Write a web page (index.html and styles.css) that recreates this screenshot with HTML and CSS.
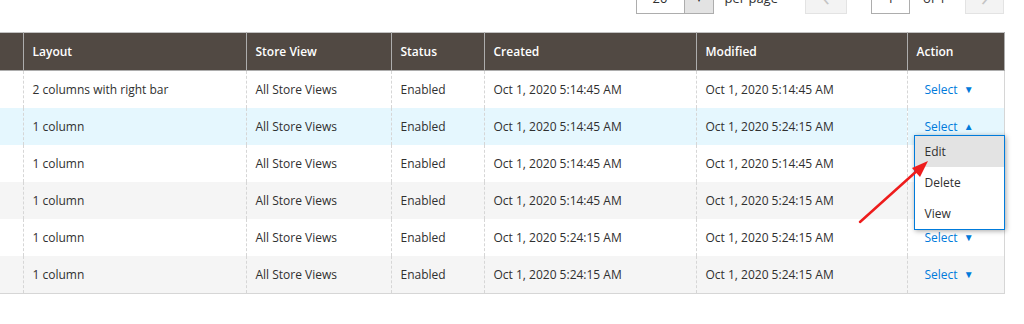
FILE: index.html
```html
<!DOCTYPE html>
<html lang="en">
<head>
  <meta charset="UTF-8" />
  <title>CMS Pages</title>
  <link rel="stylesheet" href="styles.css">
</head>
<body>
  <div class="grid-wrap">
    <div class="toolbar">
      <div class="limiter">
        <span class="limiter-value">20</span>
        <span class="limiter-btn">▾</span>
      </div>
      <span class="toolbar-label">per page</span>
      <span class="pager-btn prev">&lsaquo;</span>
      <span class="page-input">1</span>
      <span class="toolbar-label of">of 1</span>
      <span class="pager-btn next">&rsaquo;</span>
    </div>

    <table class="data-grid">
      <thead>
        <tr>
          <th class="col-check"></th>
          <th class="col-layout">Layout</th>
          <th class="col-store">Store View</th>
          <th class="col-status">Status</th>
          <th class="col-created">Created</th>
          <th class="col-modified">Modified</th>
          <th class="col-action">Action</th>
        </tr>
      </thead>
      <tbody>
        <tr>
          <td></td>
          <td>2 columns with right bar</td>
          <td>All Store Views</td>
          <td>Enabled</td>
          <td>Oct 1, 2020 5:14:45 AM</td>
          <td>Oct 1, 2020 5:14:45 AM</td>
          <td><a class="action-select">Select <span class="caret">&#9660;</span></a></td>
        </tr>
        <tr class="active">
          <td></td>
          <td>1 column</td>
          <td>All Store Views</td>
          <td>Enabled</td>
          <td>Oct 1, 2020 5:14:45 AM</td>
          <td>Oct 1, 2020 5:24:15 AM</td>
          <td class="action-cell">
            <a class="action-select">Select <span class="caret">&#9650;</span></a>
            <ul class="action-menu">
              <li class="hover">Edit</li>
              <li>Delete</li>
              <li>View</li>
            </ul>
          </td>
        </tr>
        <tr>
          <td></td>
          <td>1 column</td>
          <td>All Store Views</td>
          <td>Enabled</td>
          <td>Oct 1, 2020 5:14:45 AM</td>
          <td>Oct 1, 2020 5:14:45 AM</td>
          <td><a class="action-select">Select <span class="caret">&#9660;</span></a></td>
        </tr>
        <tr class="odd">
          <td></td>
          <td>1 column</td>
          <td>All Store Views</td>
          <td>Enabled</td>
          <td>Oct 1, 2020 5:14:45 AM</td>
          <td>Oct 1, 2020 5:24:15 AM</td>
          <td><a class="action-select">Select <span class="caret">&#9660;</span></a></td>
        </tr>
        <tr>
          <td></td>
          <td>1 column</td>
          <td>All Store Views</td>
          <td>Enabled</td>
          <td>Oct 1, 2020 5:24:15 AM</td>
          <td>Oct 1, 2020 5:24:15 AM</td>
          <td><a class="action-select">Select <span class="caret">&#9660;</span></a></td>
        </tr>
        <tr class="odd">
          <td></td>
          <td>1 column</td>
          <td>All Store Views</td>
          <td>Enabled</td>
          <td>Oct 1, 2020 5:24:15 AM</td>
          <td>Oct 1, 2020 5:24:15 AM</td>
          <td><a class="action-select">Select <span class="caret">&#9660;</span></a></td>
        </tr>
      </tbody>
    </table>

    <!-- annotation arrow -->
    <svg class="annotation" width="1024" height="324" viewBox="0 0 1024 324">
      <line x1="860" y1="222" x2="919" y2="169" stroke="#ee1c1c" stroke-width="2.5" stroke-linecap="round"/>
      <polygon points="928,161 912,168 920,177" fill="#ee1c1c"/>
    </svg>
  </div>
</body>
</html>
```

FILE: styles.css
```css
body {
  margin: 0;
  background: #fff;
  font-family: "Open Sans", "Liberation Sans", sans-serif;
  font-size: 12px;
  color: #303030;
  overflow: hidden;
}

.grid-wrap {
  position: relative;
  display: flow-root;
  width: 1024px;
  height: 324px;
}

.toolbar {
  display: flex;
  align-items: center;
  width: 1004px;
  height: 32px;
  margin-top: -18px;
  margin-bottom: 18px;
  justify-content: flex-end;
}

.limiter {
  display: flex;
  height: 32px;
  box-sizing: border-box;
}

.limiter-value {
  width: 48px;
  box-sizing: border-box;
  border: 1px solid #adadad;
  border-right: none;
  text-align: center;
  line-height: 30px;
  font-size: 13px;
}

.limiter-btn {
  width: 30px;
  box-sizing: border-box;
  border: 1px solid #adadad;
  background: #e3e3e3;
  text-align: center;
  line-height: 30px;
  color: #303030;
}

.toolbar-label {
  margin-left: 11px;
  font-size: 13px;
  color: #303030;
}

.pager-btn {
  width: 42px;
  height: 32px;
  box-sizing: border-box;
  margin-left: 27px;
  border: 1px solid #e3e3e3;
  background: #f3f3f3;
  color: #c4c4c4;
  text-align: center;
  font-size: 24px;
  line-height: 28px;
}

.pager-btn.next {
  width: 39px;
  margin-left: 19px;
}

.page-input {
  width: 39px;
  height: 32px;
  box-sizing: border-box;
  margin-left: 24px;
  border: 1px solid #adadad;
  text-align: center;
  line-height: 30px;
  font-size: 13px;
}

.toolbar-label.of {
  margin-left: 13px;
}

.data-grid {
  border-collapse: collapse;
  width: 1004px;
  table-layout: fixed;
}

.data-grid th {
  background: #514943;
  color: #fff;
  font-weight: 600;
  text-align: left;
  height: 38px;
  padding: 0 9px;
  border: 1px solid #adadad;
  border-left-color: #a39d98;
  border-top-color: #c2c2c2;
}

.data-grid th.col-check { width: 23px; padding: 0; border-left: none; }
.data-grid th.col-layout { width: 223px; }
.data-grid th.col-store { width: 145px; }
.data-grid th.col-status { width: 93px; }
.data-grid th.col-created { width: 212px; }
.data-grid th.col-modified { width: 211px; }
.data-grid th.col-action { width: 97px; }

.data-grid th, .data-grid td {
  box-sizing: border-box;
}

.data-grid td {
  height: 37px;
  padding: 0 9px;
  border-left: 1px dashed #d6d6d6;
  border-right: 1px dashed #d6d6d6;
  white-space: nowrap;
}

.data-grid td:first-child {
  border-left: none;
  padding: 0;
}

.data-grid td:last-child {
  border-right: 1px solid #d6d6d6;
  padding-left: 17px;
}

.data-grid tbody tr:last-child td {
  height: 38px;
  border-bottom: 1px solid #d6d6d6;
}

.data-grid tr.odd td { background: #f5f5f5; }
.data-grid tr.active td { background: #e5f7fe; }

.action-select {
  color: #007bdb;
  cursor: pointer;
}

.caret {
  font-size: 10px;
  margin-left: 3px;
  vertical-align: 1px;
}

.action-cell {
  position: relative;
}

.action-menu {
  position: absolute;
  left: 6px;
  top: 27px;
  width: 91px;
  box-sizing: border-box;
  margin: 0;
  padding: 0;
  list-style: none;
  background: #fff;
  border: 1px solid #007bdb;
  box-shadow: 1px 1px 5px rgba(0, 0, 0, 0.35);
  z-index: 2;
}

.action-menu li {
  height: 31px;
  line-height: 31px;
  padding-left: 10px;
  color: #303030;
}

.action-menu li.hover {
  background: #e3e3e3;
}

.annotation {
  position: absolute;
  left: 0;
  top: 0;
  pointer-events: none;
  z-index: 3;
}
```
